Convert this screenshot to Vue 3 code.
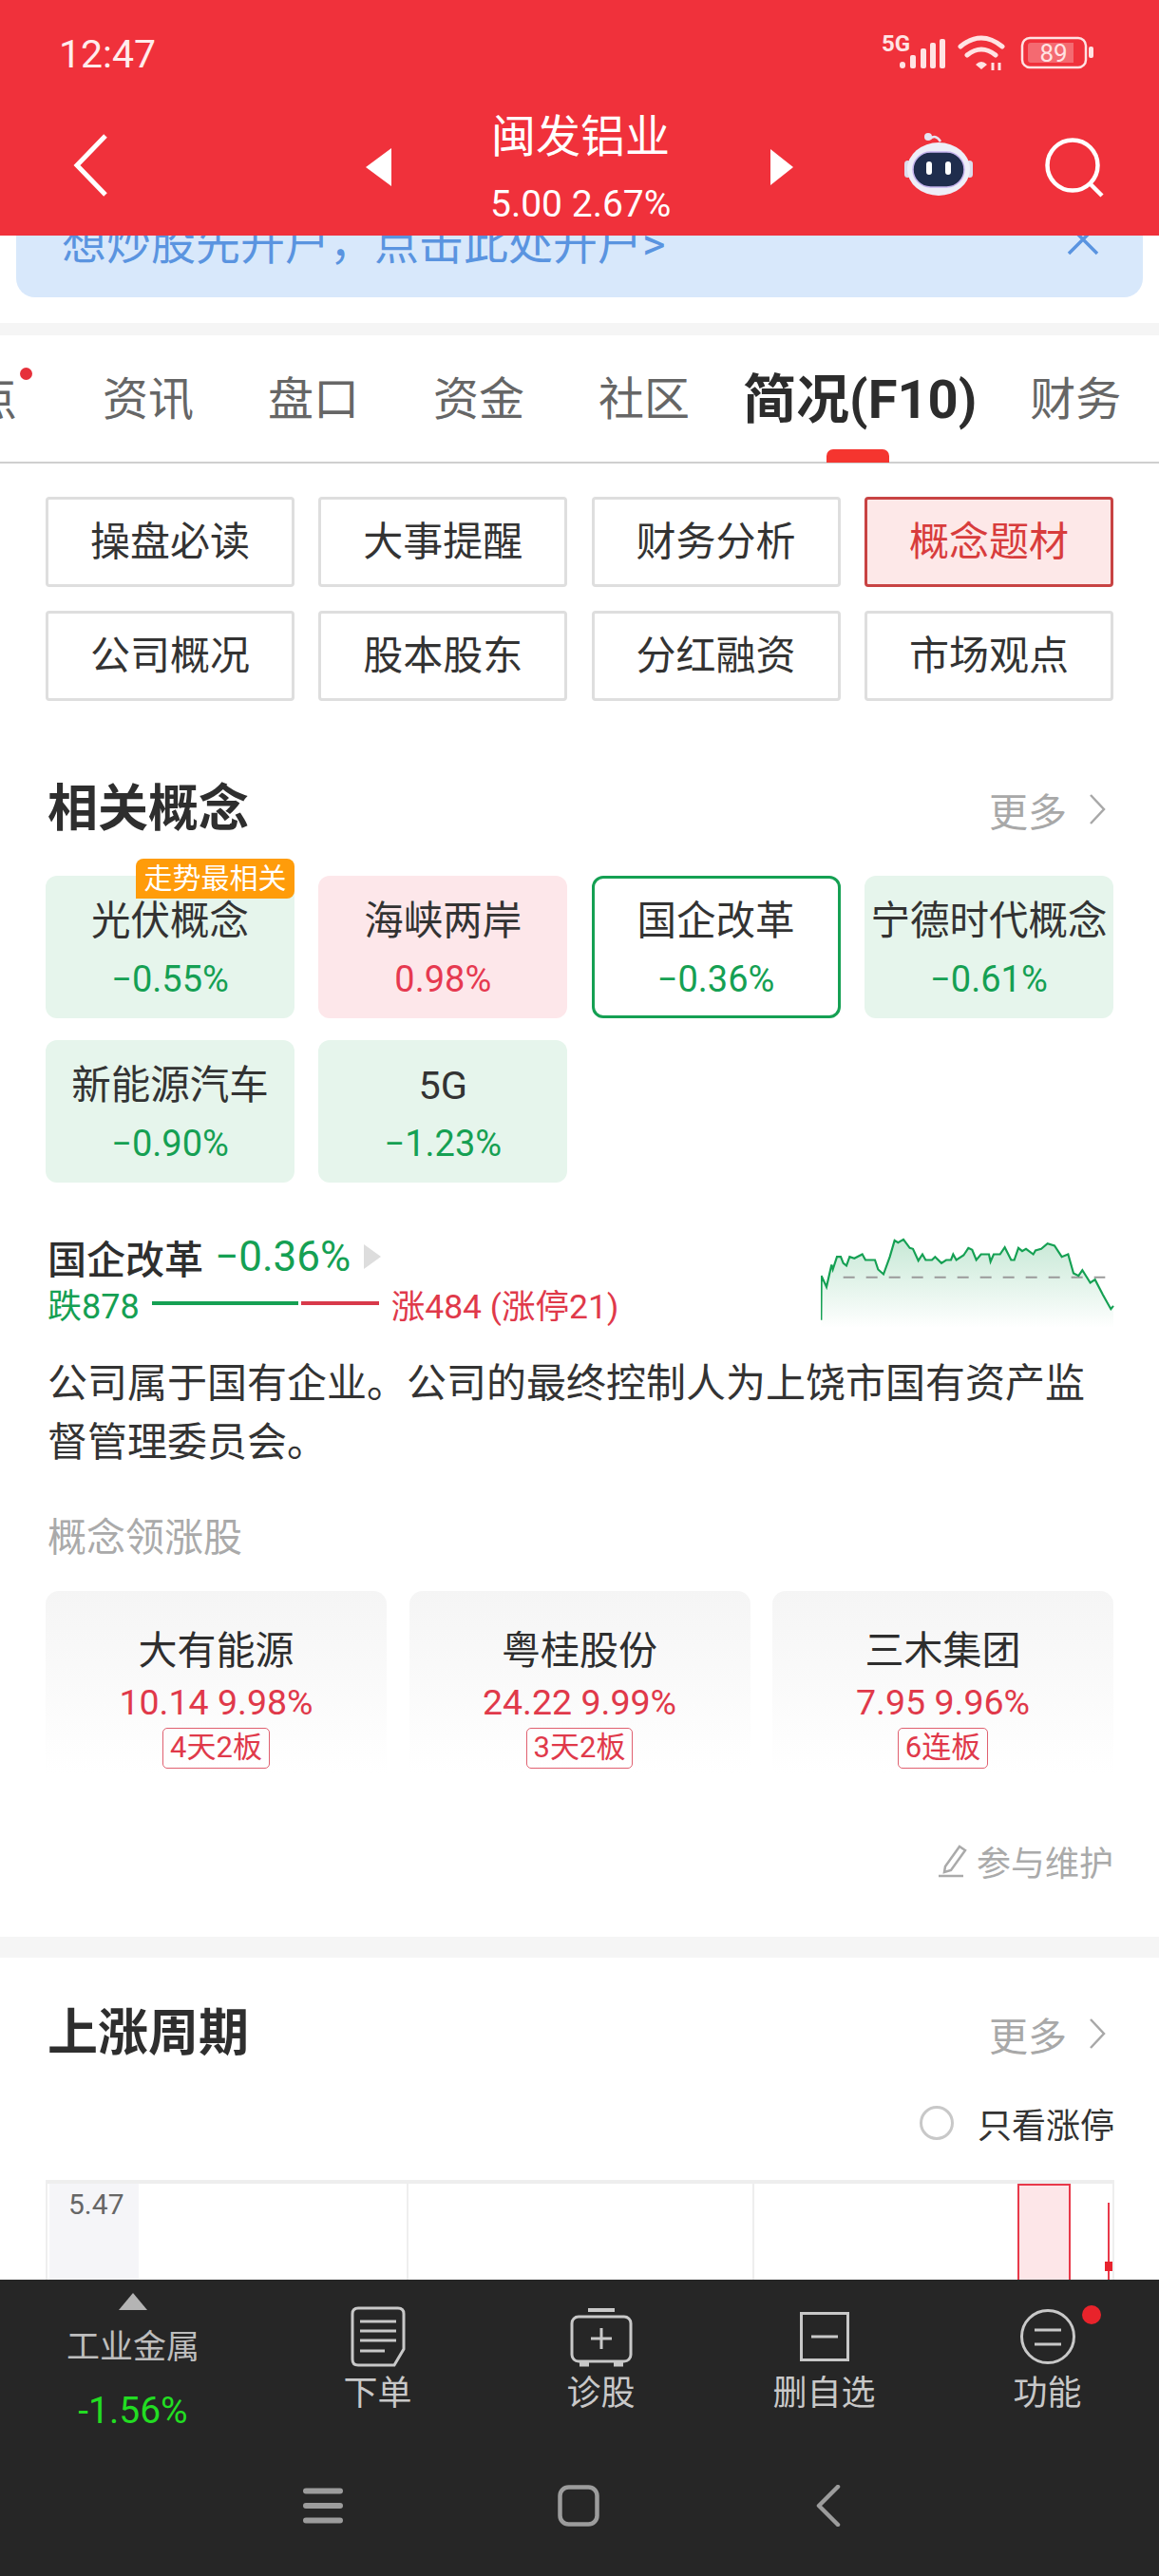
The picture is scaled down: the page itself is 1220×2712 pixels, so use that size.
<template>
  <div class="screen">
    <div class="main">
      <header class="topbar">
        <div class="status">
          <span class="time">12:47</span>
          <svg class="status-icons" width="232" height="50" viewBox="925 30 232 50">
            <text x="928" y="54" class="net">5G</text>
            <g fill="#ffe3e3">
              <rect x="947" y="65" width="6" height="7" rx="3" />
              <rect x="958" y="58" width="6" height="14" rx="2" />
              <rect x="969" y="51" width="6" height="21" rx="2" />
              <rect x="979" y="45" width="6" height="27" rx="2" />
              <rect x="989" y="41" width="6" height="31" rx="2" />
            </g>
            <g fill="none" stroke="#ffe3e3" stroke-width="5" stroke-linecap="round">
              <path d="M1011 49 Q1033 31 1055 49" />
              <path d="M1018 58 Q1033 46 1048 58" />
            </g>
            <path d="M1027 68 Q1033 62 1039 68 L1033 73 Z" fill="#ffe3e3" />
            <path d="M1045 74 V66 M1052 74 V66" stroke="#ffe3e3" stroke-width="3" />
            <rect x="1076" y="40" width="67" height="31" rx="8" fill="none" stroke="#ffe3e3" stroke-width="2.5" />
            <path d="M1085 45 H1130 V66 H1085 Q1082 66 1082 63 V48 Q1082 45 1085 45 Z" fill="#ffffff" fill-opacity="0.28" />
            <rect x="1146" y="49" width="5" height="12" rx="2" fill="#ffe3e3" />
            <text x="1109" y="65" class="batt">89</text>
          </svg>
        </div>
        <div class="nav">
          <div class="nav-left">
            <svg width="44" height="70" viewBox="0 0 44 70">
              <path d="M38 4 L8 35 L38 66" fill="none" stroke="#fff" stroke-width="5" />
            </svg>
          </div>
          <div class="nav-center">
            <svg class="tri" width="28" height="40" viewBox="0 0 28 40"><path d="M27 0 V40 L0 20 Z" fill="#fff" /></svg>
            <div class="stock">
              <div class="stock-name">闽发铝业</div>
              <div class="stock-price">5.00 2.67%</div>
            </div>
            <svg class="tri" width="24" height="38" viewBox="0 0 24 38"><path d="M0 0 V38 L24 19 Z" fill="#fff" /></svg>
          </div>
          <div class="nav-right">
            <svg class="robot" width="74" height="70" viewBox="0 0 74 70">
              <path d="M28 9 Q34 4 39 12" fill="none" stroke="#e6e4f2" stroke-width="2.5" />
              <circle cx="26" cy="7" r="4" fill="#e6e4f2" />
              <rect x="1" y="32" width="7" height="18" rx="3.5" fill="#dcdcec" />
              <rect x="66" y="32" width="7" height="18" rx="3.5" fill="#dcdcec" />
              <ellipse cx="37" cy="41" rx="33" ry="28" fill="#eeeef8" />
              <rect x="10" y="23" width="54" height="37" rx="18.5" fill="#1f2d4d" stroke="#c6b4ee" stroke-width="1.5" />
              <rect x="24" y="33" width="6" height="14" rx="3" fill="#fff" />
              <rect x="44" y="33" width="6" height="14" rx="3" fill="#fff" />
            </svg>
            <svg class="search" width="64" height="70" viewBox="0 0 64 70">
              <circle cx="30" cy="30" r="26.5" fill="none" stroke="#fff" stroke-width="4.5" />
              <path d="M49 50 L61 62" stroke="#fff" stroke-width="4.5" />
            </svg>
          </div>
        </div>
      </header>

      <div class="banner">
        <span>想炒股先开户，点击此处开户&gt;</span>
        <svg width="36" height="36" viewBox="0 0 36 36"><path d="M3 3 L33 33 M33 3 L3 33" stroke="#5a94e0" stroke-width="3.5" /></svg>
      </div>

      <div class="band band-thin"></div>

      <div class="tabs">
        <div class="tab tab-first">点<i class="tab-dot"></i></div>
        <div class="tab" v-for="t in tabsA" :key="t">{{ t }}</div>
        <div class="tab tab-active">简况(F10)<i class="tab-bar"></i></div>
        <div class="tab">财务</div>
      </div>

      <div class="shortcuts">
        <div class="shortcut" v-for="s in shortcuts" :key="s" :class="{ on: s === '概念题材' }">{{ s }}</div>
      </div>

      <div class="sec-head first">
        <h2>相关概念</h2>
        <div class="more">更多<svg width="20" height="36" viewBox="0 0 20 36"><path d="M3 3 L17 18 L3 33" fill="none" stroke="#a8a8a8" stroke-width="2.5" /></svg></div>
      </div>

      <div class="concepts">
        <div class="concept" v-for="c in concepts" :key="c.name" :class="c.kind">
          <span v-if="c.badge" class="badge">走势最相关</span>
          <div class="concept-name">{{ c.name }}</div>
          <div class="concept-pct">{{ c.pct }}</div>
        </div>
      </div>

      <div class="detail">
        <div class="detail-left">
          <div class="detail-title">
            <b>国企改革</b>
            <span class="green">−0.36%</span>
            <svg width="18" height="26" viewBox="0 0 18 26"><path d="M0 0 L18 13 L0 26 Z" fill="#dddddd" /></svg>
          </div>
          <div class="breadth">
            <span class="green">跌878</span>
            <i class="seg seg-g"></i>
            <i class="seg seg-r"></i>
            <span class="red">涨484 (涨停21)</span>
          </div>
        </div>
        <svg class="spark" width="310" height="107" viewBox="74 40 930 320">
          <defs>
            <linearGradient id="sparkFill" x1="0" y1="0" x2="0" y2="1">
              <stop offset="0" stop-color="#15a053" stop-opacity="0.24" />
              <stop offset="1" stop-color="#15a053" stop-opacity="0" />
            </linearGradient>
          </defs>
          <path :d="sparkArea" fill="url(#sparkFill)" />
          <path d="M145 195 H972" stroke="#9a9a9a" stroke-width="6" stroke-dasharray="36 36" />
          <path :d="sparkLine" fill="none" stroke="#15a053" stroke-width="6.5" />
        </svg>
      </div>

      <p class="desc">公司属于国有企业。公司的最终控制人为上饶市国有资产监督管理委员会。</p>

      <div class="leaders-title">概念领涨股</div>
      <div class="leaders">
        <div class="leader" v-for="l in leaders" :key="l.name">
          <div class="leader-name">{{ l.name }}</div>
          <div class="leader-price">{{ l.price }}</div>
          <span class="leader-tag">{{ l.tag }}</span>
        </div>
      </div>

      <div class="maintain">
        <svg width="34" height="36" viewBox="0 0 34 36">
          <path d="M9 24 L24 3 L30 7 L15 28 L8 30 Z M2 34 H28" fill="none" stroke="#aaaaaa" stroke-width="2.5" />
        </svg>
        <span>参与维护</span>
      </div>

      <div class="band band-thick"></div>

      <div class="sec-head second">
        <h2>上涨周期</h2>
        <div class="more">更多<svg width="20" height="36" viewBox="0 0 20 36"><path d="M3 3 L17 18 L3 33" fill="none" stroke="#a8a8a8" stroke-width="2.5" /></svg></div>
      </div>

      <div class="only-limit">
        <i class="radio"></i>
        <span>只看涨停</span>
      </div>

      <div class="chart">
        <div class="axis">5.47</div>
        <i class="grid-line l1"></i>
        <i class="grid-line l2"></i>
        <i class="zone"></i>
        <i class="wick"></i>
        <i class="tick"></i>
      </div>
    </div>

    <footer class="bottom">
      <div class="tools">
        <div class="tool sector">
          <svg width="30" height="18" viewBox="0 0 30 18"><path d="M15 0 L30 18 H0 Z" fill="#b4b4b4" /></svg>
          <div class="sector-name">工业金属</div>
          <div class="sector-pct">-1.56%</div>
        </div>
        <div class="tool">
          <svg width="66" height="66" viewBox="0 0 66 66" class="tool-icon">
            <path d="M12 3 H54 Q60 3 60 9 V46 L50 63 H12 Q6 63 6 57 V9 Q6 3 12 3 Z" fill="none" stroke="#c8c8c8" stroke-width="3" />
            <path d="M14 17 H52 M14 27 H52 M14 37 H52 M14 48 H40" stroke="#c8c8c8" stroke-width="3" />
          </svg>
          <span>下单</span>
        </div>
        <div class="tool">
          <svg width="70" height="66" viewBox="0 0 70 66" class="tool-icon">
            <rect x="4" y="12" width="62" height="47" rx="7" fill="none" stroke="#c8c8c8" stroke-width="3" />
            <path d="M21 5 H49" stroke="#c8c8c8" stroke-width="4" />
            <path d="M12 62 H22 M48 62 H58" stroke="#c8c8c8" stroke-width="5" />
            <path d="M35 24 V46 M24 35 H46" stroke="#c8c8c8" stroke-width="3" />
          </svg>
          <span>诊股</span>
        </div>
        <div class="tool">
          <svg width="66" height="66" viewBox="0 0 66 66" class="tool-icon">
            <rect x="8.5" y="8.5" width="49" height="49" fill="none" stroke="#c8c8c8" stroke-width="3" />
            <path d="M19 33 H47" stroke="#c8c8c8" stroke-width="3" />
          </svg>
          <span>删自选</span>
        </div>
        <div class="tool">
          <svg width="66" height="66" viewBox="0 0 66 66" class="tool-icon">
            <circle cx="33" cy="33" r="27.5" fill="none" stroke="#c8c8c8" stroke-width="3" />
            <path d="M19 26 H47 M19 41 H47" stroke="#c8c8c8" stroke-width="3" />
          </svg>
          <span>功能</span>
          <i class="tool-dot"></i>
        </div>
      </div>
      <div class="sysnav">
        <svg width="42" height="38" viewBox="0 0 42 38"><path d="M3 3.5 H39 M3 19 H39 M3 34.5 H39" stroke="#9c9c9c" stroke-width="6" stroke-linecap="round" /></svg>
        <svg width="44" height="44" viewBox="0 0 44 44"><rect x="2.5" y="2.5" width="39" height="39" rx="9" fill="none" stroke="#9c9c9c" stroke-width="4.5" /></svg>
        <svg width="28" height="44" viewBox="0 0 28 44"><path d="M25 2 L5 22 L25 42" fill="none" stroke="#9c9c9c" stroke-width="4.5" stroke-linecap="round" stroke-linejoin="round" /></svg>
      </div>
    </footer>
  </div>
</template>

<script setup>
const tabsA = ['资讯', '盘口', '资金', '社区']

const shortcuts = ['操盘必读', '大事提醒', '财务分析', '概念题材', '公司概况', '股本股东', '分红融资', '市场观点']

const concepts = [
  { name: '光伏概念', pct: '−0.55%', kind: 'down', badge: true },
  { name: '海峡两岸', pct: '0.98%', kind: 'up' },
  { name: '国企改革', pct: '−0.36%', kind: 'down picked' },
  { name: '宁德时代概念', pct: '−0.61%', kind: 'down' },
  { name: '新能源汽车', pct: '−0.90%', kind: 'down' },
  { name: '5G', pct: '−1.23%', kind: 'down' }
]

const leaders = [
  { name: '大有能源', price: '10.14 9.98%', tag: '4天2板' },
  { name: '粤桂股份', price: '24.22 9.99%', tag: '3天2板' },
  { name: '三木集团', price: '7.95 9.96%', tag: '6连板' }
]

// traced from the intraday line, in zoomed coordinates
const pts = [[75,330],[76,190],[92,225],[108,155],[112,170],[125,130],[137,130],[145,150],[155,158],[165,130],[180,135],[205,122],[215,140],[245,140],[255,170],[272,185],[292,130],[307,78],[318,85],[335,75],[355,102],[365,105],[382,142],[395,122],[405,140],[425,140],[435,130],[455,150],[470,140],[485,140],[492,122],[502,140],[525,125],[540,102],[552,108],[565,140],[580,122],[605,122],[610,145],[620,122],[640,122],[655,100],[675,140],[685,140],[698,102],[710,112],[722,105],[745,122],[752,110],[770,105],[790,88],[812,95],[835,130],[855,122],[872,182],[888,190],[900,172],[925,212],[940,202],[965,250],[990,295],[998,285]]
const sparkLine = 'M' + pts.map(p => p.join(' ')).join(' L')
const sparkArea = sparkLine + ' L998 355 L75 355 Z'
</script>

<style>
html, body { margin: 0; background: #fff; }
</style>

<style scoped>
.screen {
  width: 1220px;
  height: 2712px;
  display: flex;
  flex-direction: column;
  overflow: hidden;
  background: #fff;
  color: #333;
  font-family: Roboto, "Noto Sans CJK SC", sans-serif;
}
.main { height: 2400px; overflow: hidden; flex: none; }

.topbar { position: relative; z-index: 2; height: 248px; background: #f0313b; color: #fff; }
.status { height: 96px; display: flex; align-items: flex-start; justify-content: space-between; padding: 0 63px 0 62px; }
.time { font-size: 41px; line-height: 114px; color: #ffecec; }
.status-icons { margin-top: 30px; }
.net { font: 700 24px Roboto, sans-serif; fill: #ffe3e3; }
.batt { font: 400 26px Roboto, sans-serif; fill: #ffe3e3; text-anchor: middle; }

.nav { height: 152px; display: grid; grid-template-columns: 1fr auto 1fr; }
.nav-left { padding: 43px 0 0 73px; }
.nav-center { display: flex; align-items: center; gap: 104px; height: 124px; padding-top: 17px; }
.stock { width: 190px; margin-left: -1px; margin-right: 1px; text-align: center; white-space: nowrap; }
.tri { margin-top: 2px; }
.stock-name { font-size: 47px; line-height: 62px; }
.stock-price { font-size: 39px; line-height: 44px; margin-top: 18px; }
.nav-right { display: flex; justify-content: flex-end; align-items: flex-start; padding: 41px 57px 0 0; gap: 74px; }
.search { margin-top: 7px; }

.banner {
  height: 125px;
  margin: -60px 17px 0;
  padding: 39px 45px 0 48px;
  box-sizing: border-box;
  display: flex;
  align-items: flex-start;
  justify-content: space-between;
  background: #d8e8fb;
  border-radius: 20px;
  color: #5a94e0;
  font-size: 47px;
  line-height: 60px;
}
.banner svg { margin-top: 7px; }

.band { background: #f5f5f5; }
.band-thin { height: 13px; margin-top: 27px; }
.band-thick { height: 22px; margin-top: 55px; }

.tabs {
  height: 135px;
  box-sizing: border-box;
  border-bottom: 2px solid #cfcfcf;
  display: flex;
  gap: 78px;
  margin-left: -30px;
  white-space: nowrap;
  padding-top: 32px;
  font-size: 48px;
  line-height: 72px;
  color: #666;
}
.tab { position: relative; flex: none; }
.tab-first { margin-right: 12px; }
.tab-dot { position: absolute; left: 51px; top: 2px; width: 13px; height: 13px; border-radius: 50%; background: #e6303a; }
.tab-active { font-size: 56px; font-weight: 700; color: #2c2c2c; margin: 0 -22px; }
.tab-bar { position: absolute; left: 88px; top: 88px; width: 66px; height: 14px; border-radius: 7px 7px 0 0; background: #f5352f; }

.shortcuts {
  display: grid;
  grid-template-columns: repeat(4, 262px);
  column-gap: 25.3px;
  row-gap: 25px;
  margin: 35px 0 0 48px;
}
.shortcut {
  height: 95px;
  box-sizing: border-box;
  border: 3px solid #dedede;
  border-radius: 4px;
  font-size: 42px;
  line-height: 89px;
  text-align: center;
}
.shortcut.on { border-color: #c84343; background: #fde8e8; color: #d83c3c; }

.sec-head { display: flex; justify-content: space-between; align-items: center; height: 60px; padding: 0 47px 0 50px; }
.sec-head.first { margin-top: 84px; }
.sec-head.second { margin-top: 50px; }
.sec-head h2 { margin: 0; font-size: 53px; font-weight: 700; color: #2e2e2e; line-height: 60px; }
.more { display: flex; align-items: center; gap: 22px; font-size: 41px; color: #a8a8a8; padding-right: 8px; }

.concepts {
  display: grid;
  grid-template-columns: repeat(4, 262px);
  column-gap: 25.3px;
  row-gap: 23px;
  margin: 40px 0 0 48px;
}
.concept {
  position: relative;
  height: 150px;
  box-sizing: border-box;
  border-radius: 12px;
  text-align: center;
  padding-top: 21px;
}
.concept.down { background: #e6f5ec; color: #15a053; }
.concept.up { background: #fde7ea; color: #e63950; }
.concept.picked { background: #fff; border: 3px solid #15a053; padding-top: 18px; }
.badge {
  position: absolute;
  right: 0;
  top: -18px;
  width: 167px;
  height: 42px;
  border-radius: 8px 8px 8px 0;
  background: #ff9c0a;
  color: #fff;
  font-size: 30px;
  line-height: 42px;
}
.concept-name { font-size: 41.5px; line-height: 54px; color: #333; white-space: nowrap; }
.concept-pct { font-size: 38px; line-height: 48px; margin-top: 10px; }

.detail { display: flex; justify-content: space-between; margin: 48px 46px 0 50px; height: 107px; }
.detail-title { display: flex; align-items: center; height: 52px; margin-top: 4px; }
.detail-title b { font-size: 41px; font-weight: 500; color: #2e2e2e; margin-right: 12px; }
.detail-title span { font-size: 44px; margin-right: 14px; }
.green { color: #15a053; }
.red { color: #e0394a; }
.breadth { display: flex; align-items: center; font-size: 36px; height: 44px; margin-top: 1px; }
.breadth .red { font-size: 35.5px; }
.seg { height: 4px; display: block; }
.seg-g { width: 154px; margin-left: 13px; background: #15a053; }
.seg-r { width: 82px; margin-left: 3px; margin-right: 13px; background: #d8394a; }

.desc { margin: 26px 47px 0 50px; font-size: 42px; line-height: 62px; color: #333; }

.leaders-title { margin: 39px 0 0 50px; font-size: 41px; line-height: 60px; color: #aaa; }
.leaders { display: grid; grid-template-columns: repeat(3, 359px); column-gap: 23.5px; margin: 26px 0 0 48px; }
.leader {
  height: 200px;
  box-sizing: border-box;
  padding-top: 38px;
  border-radius: 14px 14px 0 0;
  background: linear-gradient(#f5f5f5, #ffffff 96%);
  text-align: center;
}
.leader-name { font-size: 41px; line-height: 50px; color: #2e2e2e; }
.leader-price { font-size: 37.5px; line-height: 44px; margin-top: 7px; color: #e0394a; }
.leader-tag {
  display: inline-block;
  margin-top: 5px;
  padding: 0 7px;
  height: 43px;
  box-sizing: border-box;
  border: 1.5px solid #e06070;
  border-radius: 5px;
  font-size: 31px;
  line-height: 40px;
  color: #e0394a;
}

.maintain { display: flex; justify-content: flex-end; align-items: center; height: 50px; margin: 59px 48px 0 0; gap: 8px; font-size: 36px; color: #aaa; }

.only-limit { display: flex; justify-content: flex-end; align-items: center; height: 50px; margin: 39px 47px 0 0; gap: 25px; font-size: 36px; }
.radio { width: 36px; height: 36px; box-sizing: border-box; border: 3px solid #c8c8c8; border-radius: 50%; }

/* free canvas: kline chart */
.chart { position: relative; height: 200px; margin: 35px 47px 0 48px; border-top: 4px solid #eeeeee; border-left: 2px solid #eeeeee; border-right: 2px solid #eeeeee; }
.axis { width: 94px; height: 100%; margin-left: 2px; padding-left: 20px; box-sizing: border-box; background: #f5f5f8; color: #666; font-size: 30px; line-height: 44px; }
.grid-line { position: absolute; top: 0; bottom: 0; width: 2px; background: #eeeeee; }
.l1 { left: 378px; }
.l2 { left: 742px; }
.zone { position: absolute; left: 1021px; top: 0; width: 56px; height: 100%; box-sizing: border-box; border: 2px solid #e8394a; background: #fde6e8; }
.wick { position: absolute; left: 1116px; top: 20px; width: 2px; height: 100%; background: #e8394a; }
.tick { position: absolute; left: 1113px; top: 82px; width: 8px; height: 10px; background: #e8232e; }

.bottom { flex: 1; background: #262626; color: #c8c8c8; }
.tools { display: grid; grid-template-columns: 280px repeat(4, 1fr); height: 190px; }
.tool { position: relative; display: flex; flex-direction: column; align-items: center; font-size: 36px; line-height: 44px; padding-top: 27px; box-sizing: border-box; }
.tool-icon { margin-bottom: 5px; }
.sector { padding-top: 14px; }
.sector-name { font-size: 35px; line-height: 44px; margin-top: 18px; color: #bdbdbd; }
.sector-pct { font-size: 39px; line-height: 44px; margin-top: 22px; color: #22dd22; }
.tool-dot { position: absolute; left: 154px; top: 27px; width: 20px; height: 20px; border-radius: 50%; background: #e9232b; }
.sysnav { display: flex; justify-content: space-between; align-items: center; width: 566px; margin: 26px 0 0 319px; height: 44px; }
</style>
